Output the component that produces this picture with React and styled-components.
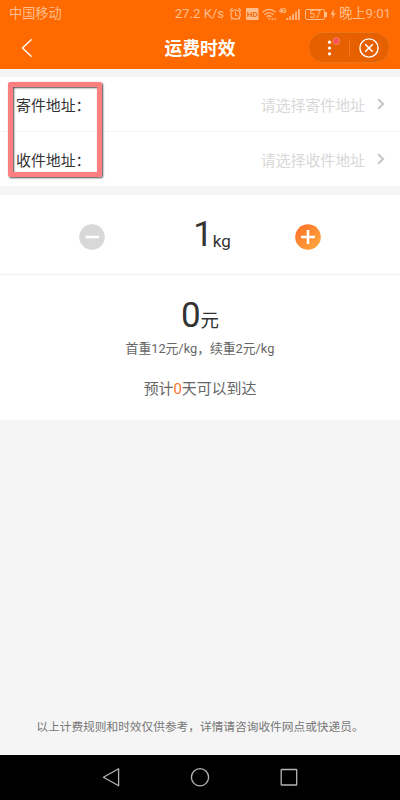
import styled, { createGlobalStyle } from 'styled-components';

const addresses = [
  { label: '寄件地址：', placeholder: '请选择寄件地址' },
  { label: '收件地址：', placeholder: '请选择收件地址' },
];

export default function App() {
  return (
    <Page>
      <GlobalStyle />
      <StatusBar>
        <Carrier>中国移动</Carrier>
        <Speed>27.2 K/s</Speed>
        <StatusIcons />
        <Battery>57</Battery>
        <Bolt width="6" height="12" viewBox="0 0 6 12">
          <path d="M4 1 0.5 6.6H2.6L2 11 5.5 5.2H3.4Z" fill="currentColor" />
        </Bolt>
        <Clock>晚上9:01</Clock>
      </StatusBar>

      <Header>
        <BackButton aria-label="返回">
          <svg width="12" height="20" viewBox="0 0 12 20" fill="none" stroke="#fff" strokeWidth="1.3">
            <path d="M10.7 1.2 1.5 10l9.2 8.8" />
          </svg>
        </BackButton>
        <Title>运费时效</Title>
        <Capsule>
          <CapsuleButton aria-label="更多">
            <svg width="22" height="22" viewBox="0 0 22 22">
              <g fill="#fff">
                <circle cx="11.5" cy="5.2" r="1.6" />
                <circle cx="11.5" cy="11" r="1.6" />
                <circle cx="11.5" cy="16.8" r="1.6" />
              </g>
              <circle cx="18.3" cy="4" r="3.4" fill="#fc5058" stroke="#f08a58" strokeWidth="0.9" />
            </svg>
          </CapsuleButton>
          <CapsuleLine />
          <CapsuleButton aria-label="关闭">
            <svg width="20" height="20" viewBox="0 0 20 20" fill="none" stroke="#fff">
              <circle cx="10" cy="10" r="9.1" strokeWidth="1.4" />
              <path d="m6.2 6.2 7.6 7.6m0-7.6-7.6 7.6" strokeWidth="1.5" />
            </svg>
          </CapsuleButton>
        </Capsule>
      </Header>

      <AddressCard>
        {addresses.map((item) => (
          <AddressRow key={item.label}>
            <Label>{item.label}</Label>
            <Placeholder>{item.placeholder}</Placeholder>
            <svg width="8" height="12" viewBox="0 0 8 12" fill="none" stroke="#c4c4c6" strokeWidth="1.9">
              <path d="m1.2 1.2 4.9 4.8-4.9 4.8" />
            </svg>
          </AddressRow>
        ))}
        <Marker />
      </AddressCard>

      <WeightRow>
        <RoundButton aria-label="减少">
          <path d="M6.5 13H20" stroke="#fff" strokeWidth="2.6" />
        </RoundButton>
        <Weight>
          <span>1</span>
          <Unit $size={17} $bottom={3}>kg</Unit>
        </Weight>
        <RoundButton active aria-label="增加">
          <path d="M6 13h14M13 6v14" stroke="#fff" strokeWidth="2.6" />
        </RoundButton>
      </WeightRow>

      <PriceCard>
        <Amount>
          <span>0</span>
          <Unit $size={18.5}>元</Unit>
        </Amount>
        <Rule>首重12元/kg，续重2元/kg</Rule>
        <Estimate>
          预计<em>0</em>天可以到达
        </Estimate>
      </PriceCard>

      <Notice>以上计费规则和时效仅供参考，详情请咨询收件网点或快递员。</Notice>

      <NavBar>
        <svg width="20" height="20" viewBox="0 0 20 20">
          <path d="M2.4 10.3 17.6 1.8v17Z" />
        </svg>
        <svg width="20" height="20" viewBox="0 0 20 20">
          <circle cx="10" cy="10.3" r="8.6" />
        </svg>
        <svg width="20" height="20" viewBox="0 0 20 20">
          <rect x="2.2" y="2.5" width="15.5" height="15.5" rx="0.6" />
        </svg>
      </NavBar>
    </Page>
  );
}

function StatusIcons() {
  return (
    <IconStrip width="74" height="16" viewBox="0 0 74 16" fill="none" stroke="currentColor">
      <circle cx="6.5" cy="8.5" r="4.7" strokeWidth="1.2" />
      <path d="M6.5 5.8v3l2 1.2M0.8 5l2.8-2.8M12.2 5 9.4 2.2M3.4 12.2l-1.3 1.5M9.6 12.2l1.3 1.5" strokeWidth="1.1" />
      <rect x="17" y="2" width="12.5" height="12" rx="1" fill="currentColor" stroke="none" />
      <text x="23.2" y="11" textAnchor="middle" fontSize="8" fontWeight="700" fill="#f06a10" stroke="none">HD</text>
      <path d="M33.5 6.4c4-4 9.2-4 13.2 0M35.6 8.8c2.7-2.7 6.3-2.7 9 0M37.7 11c1.5-1.5 3.3-1.5 4.8 0" strokeWidth="1.3" />
      <path d="M39.5 13h1.6M42.6 13h1.6M45.4 13H47" strokeWidth="1.6" />
      <text x="50" y="6.5" fontSize="6.5" fontWeight="700" fill="currentColor" stroke="none" textLength="7.5">4G</text>
      <path d="M58.3 14v-2M61.2 14v-3.7M64.1 14V8M67 14V5.5M69.9 14V3" strokeWidth="1.7" />
    </IconStrip>
  );
}

function RoundButton({ active, children, ...rest }) {
  return (
    <StepButton {...rest}>
      <svg width="26" height="26" viewBox="0 0 26 26">
        <defs>
          <linearGradient id="orange" x1="0" y1="0" x2="1" y2="1">
            <stop offset="0.1" stopColor="#ff7429" />
            <stop offset="0.9" stopColor="#ffa63c" />
          </linearGradient>
        </defs>
        <circle cx="13" cy="13" r="12.8" fill={active ? 'url(#orange)' : '#d8d8d8'} />
        {children}
      </svg>
    </StepButton>
  );
}

const GlobalStyle = createGlobalStyle`
  * {
    box-sizing: border-box;
  }
  body {
    margin: 0;
    font-family: Roboto, 'Noto Sans CJK SC', sans-serif;
  }
  button {
    display: flex;
    padding: 0;
    border: none;
    background: none;
  }
  svg {
    display: block;
    flex: none;
  }
`;

const Page = styled.div`
  display: flex;
  flex-direction: column;
  width: 400px;
  height: 800px;
  overflow: hidden;
  background: #f5f5f5;
`;

const StatusBar = styled.div`
  display: flex;
  align-items: center;
  height: 28px;
  padding: 0 9px;
  background: #ff6a00;
  color: #ffbd8c;
  font-size: 13.2px;
  line-height: 20px;
  white-space: nowrap;
`;

const Carrier = styled.span`
  flex: 1;
`;

const Speed = styled.span`
  margin-right: 5px;
`;

const IconStrip = styled.svg`
  margin: 0 2px 1px 0;
`;

const Battery = styled.span`
  position: relative;
  width: 20px;
  height: 11px;
  border: 1px solid currentColor;
  border-radius: 2px;
  font-size: 10.5px;
  line-height: 10px;
  text-align: center;

  &::after {
    content: '';
    position: absolute;
    top: 2px;
    right: -3px;
    width: 2px;
    height: 5px;
    background: currentColor;
  }
`;

const Bolt = styled.svg`
  margin: 0 3px 0 5px;
`;

const Clock = styled.span`
  font-size: 13.2px;
`;

const Header = styled.header`
  display: grid;
  grid-template-columns: 1fr auto 1fr;
  align-items: center;
  height: 41px;
  padding: 0 10px;
  background: #ff6a00;
  color: #fff;
`;

const BackButton = styled.button`
  justify-self: start;
  margin: 0 0 2px 11px;
`;

const Title = styled.h1`
  margin: 0;
  font-size: 17.8px;
  line-height: 26px;
`;

const Capsule = styled.div`
  display: flex;
  align-items: center;
  justify-self: end;
  width: 82px;
  height: 31px;
  margin-bottom: 2px;
  border: 1px solid #ef7519;
  border-radius: 16px;
  background: #e66000;
`;

const CapsuleButton = styled.button`
  flex: 1;
  justify-content: center;
`;

const CapsuleLine = styled.i`
  width: 1px;
  height: 18px;
  background: #f0781f;
`;

const AddressCard = styled.section`
  position: relative;
  margin-top: 8px;
  background: #fff;
`;

const AddressRow = styled.div`
  display: flex;
  align-items: center;
  height: 54px;
  padding: 0 15px 0 16px;
  font-size: 14.9px;

  & + & {
    height: 55px;
    border-top: 1px solid #f5f5f5;
  }
`;

const Label = styled.span`
  color: #333;
`;

const Placeholder = styled.span`
  flex: 1;
  margin-right: 12px;
  color: #d8d8d8;
  text-align: right;
`;

/* red frame around the two labels */
const Marker = styled.div`
  position: absolute;
  top: 5px;
  left: 8px;
  width: 94px;
  height: 95px;
  border: 5px solid #fd7f82;
  border-radius: 2px;
  box-shadow: 1px 1px 2px rgba(0, 0, 0, 0.7), inset 1px 1px 2px rgba(0, 0, 0, 0.7);
`;

const WeightRow = styled.section`
  display: flex;
  align-items: center;
  justify-content: space-between;
  height: 80px;
  margin-top: 9px;
  padding: 0 79px;
  border-bottom: 1px solid #f1f1f1;
  background: #fff;
`;

const StepButton = styled.button`
  margin-top: 4px;
`;

const Amount = styled.div`
  display: flex;
  align-items: baseline;
  height: 41px;
  color: #333;
  font-size: 35px;
  line-height: 41px;
`;

const Weight = styled(Amount)`
  align-items: flex-end;
  padding-left: 24px;
`;

const Unit = styled.span`
  margin-bottom: ${(props) => props.$bottom || 0}px;
  font-size: ${(props) => props.$size}px;
  line-height: 22px;
`;

const PriceCard = styled.section`
  display: flex;
  flex-direction: column;
  align-items: center;
  height: 145px;
  padding-top: 20px;
  background: #fff;
`;

const Rule = styled.p`
  margin: 3px 0 0;
  color: #666;
  font-size: 12.8px;
  line-height: 20px;
`;

const Estimate = styled.p`
  margin: 19px 0 0;
  color: #666;
  font-size: 14.9px;
  line-height: 22px;

  em {
    color: #ff7429;
    font-style: normal;
  }
`;

const Notice = styled.p`
  margin: auto 0 19px;
  color: #777;
  font-size: 11.7px;
  line-height: 18px;
  text-align: center;
`;

const NavBar = styled.nav`
  display: flex;
  justify-content: center;
  gap: 69px;
  height: 45px;
  padding-top: 12px;
  background: #000;

  svg {
    fill: none;
    stroke: #b5b5b5;
    stroke-width: 1.3;
    stroke-linejoin: round;
  }
`;
